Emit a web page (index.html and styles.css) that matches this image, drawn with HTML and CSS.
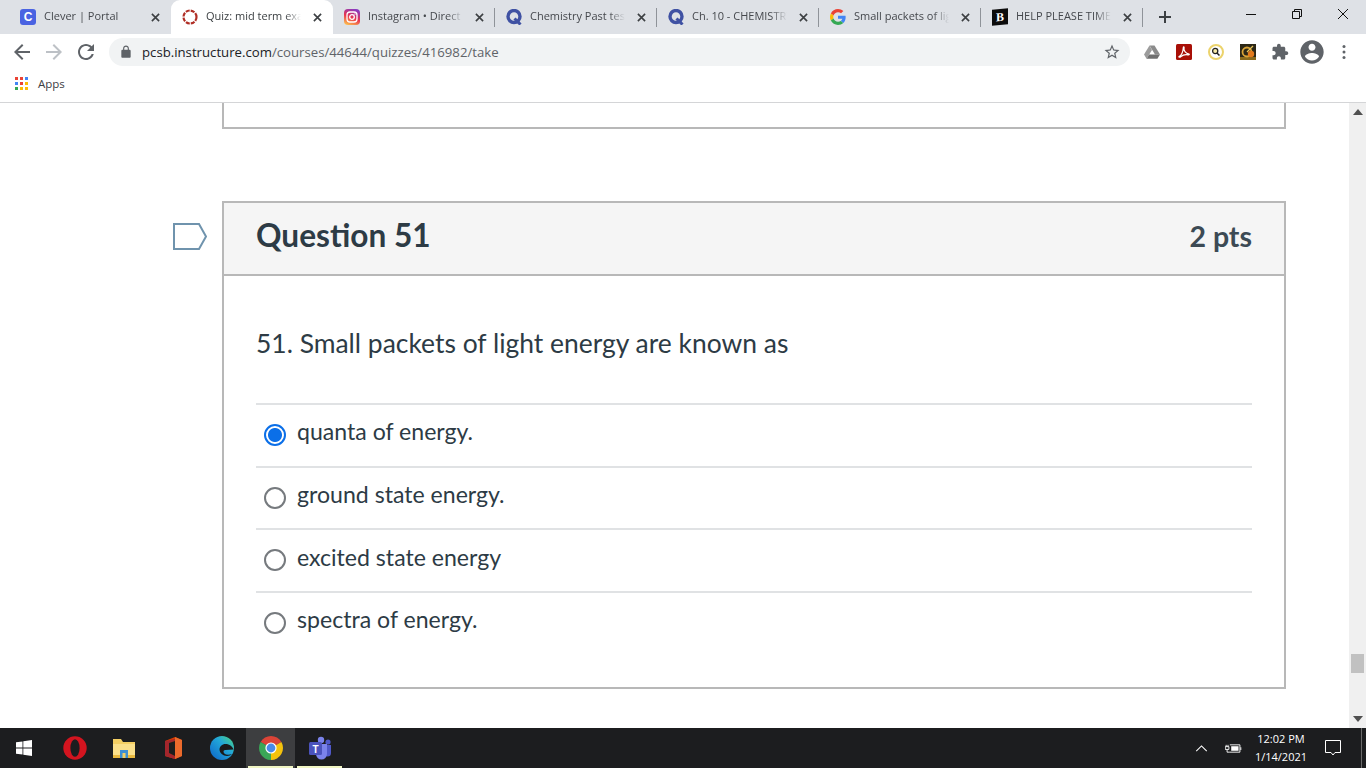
FILE: index.html
```html
<!DOCTYPE html>
<html lang="en">
<head>
<meta charset="utf-8">
<title>Quiz: mid term exam</title>
<link rel="stylesheet" href="styles.css">
</head>
<body>
<header class="browser">
  <div class="tabstrip">
    <div class="tab">
      <span class="favicon clever">C</span>
      <span class="tab-title">Clever | Portal</span>
      <svg class="tab-close" viewBox="0 0 10 10"><path d="M1 1l8 8M9 1l-8 8"/></svg>
    </div>
    <div class="tab active">
      <svg class="favicon" viewBox="0 0 16 16"><circle cx="8" cy="8" r="6.500" fill="none" stroke="#b02e25" stroke-width="2.200" stroke-dasharray="4 1.100"/></svg>
      <span class="tab-title">Quiz: mid term exam</span>
      <svg class="tab-close" viewBox="0 0 10 10"><path d="M1 1l8 8M9 1l-8 8"/></svg>
    </div>
    <div class="tab sep">
      <svg class="favicon" viewBox="0 0 16 16">
        <defs><linearGradient id="ig" x1="0.2" y1="1" x2="0.6" y2="0"><stop offset="0" stop-color="#fdc04e"/><stop offset=".5" stop-color="#e8344f"/><stop offset="1" stop-color="#8a3ac0"/></linearGradient></defs>
        <rect width="16" height="16" rx="4" fill="url(#ig)"/>
        <rect x="3" y="3" width="10" height="10" rx="3" fill="none" stroke="#fff" stroke-width="1.300"/>
        <circle cx="8" cy="8" r="2.300" fill="none" stroke="#fff" stroke-width="1.300"/>
        <circle cx="11" cy="5" r=".7" fill="#fff"/>
      </svg>
      <span class="tab-title">Instagram • Direct</span>
      <svg class="tab-close" viewBox="0 0 10 10"><path d="M1 1l8 8M9 1l-8 8"/></svg>
    </div>
    <div class="tab sep">
      <svg class="favicon" viewBox="0 0 16 16"><circle cx="8" cy="7.500" r="6" fill="none" stroke="#3f51a3" stroke-width="3.400"/><path d="M8.500 9.500l6 6" stroke="#3f51a3" stroke-width="3"/></svg>
      <span class="tab-title">Chemistry Past test</span>
      <svg class="tab-close" viewBox="0 0 10 10"><path d="M1 1l8 8M9 1l-8 8"/></svg>
    </div>
    <div class="tab sep">
      <svg class="favicon" viewBox="0 0 16 16"><circle cx="8" cy="7.500" r="6" fill="none" stroke="#3f51a3" stroke-width="3.400"/><path d="M8.500 9.500l6 6" stroke="#3f51a3" stroke-width="3"/></svg>
      <span class="tab-title">Ch. 10 - CHEMISTRY</span>
      <svg class="tab-close" viewBox="0 0 10 10"><path d="M1 1l8 8M9 1l-8 8"/></svg>
    </div>
    <div class="tab sep">
      <svg class="favicon" viewBox="0 0 48 48">
        <path fill="#EA4335" d="M24 9.500c3.540 0 6.710 1.220 9.210 3.600l6.850-6.850C35.900 2.380 30.470 0 24 0 14.620 0 6.510 5.380 2.560 13.220l7.980 6.190C12.430 13.720 17.740 9.500 24 9.500z"/>
        <path fill="#4285F4" d="M46.980 24.550c0-1.570-.15-3.090-.38-4.550H24v9.020h12.940c-.58 2.960-2.260 5.480-4.780 7.180l7.730 6c4.510-4.180 7.090-10.360 7.090-17.650z"/>
        <path fill="#FBBC05" d="M10.530 28.590c-.48-1.450-.76-2.990-.76-4.590s.27-3.140.76-4.590l-7.980-6.190C.92 16.460 0 20.120 0 24c0 3.880.92 7.540 2.560 10.780l7.970-6.190z"/>
        <path fill="#34A853" d="M24 48c6.480 0 11.930-2.130 15.890-5.810l-7.730-6c-2.150 1.450-4.920 2.300-8.160 2.300-6.260 0-11.570-4.220-13.470-9.910l-7.980 6.190C6.510 42.620 14.620 48 24 48z"/>
      </svg>
      <span class="tab-title">Small packets of light</span>
      <svg class="tab-close" viewBox="0 0 10 10"><path d="M1 1l8 8M9 1l-8 8"/></svg>
    </div>
    <div class="tab sep">
      <span class="favicon brainly">B</span>
      <span class="tab-title">HELP PLEASE TIMED</span>
      <svg class="tab-close" viewBox="0 0 10 10"><path d="M1 1l8 8M9 1l-8 8"/></svg>
    </div>
    <svg class="newtab" viewBox="0 0 12 12"><path d="M6 0v12M0 6h12"/></svg>
    <div class="window-controls">
      <svg class="wc" viewBox="0 0 46 28"><path d="M18 14.500h10"/></svg>
      <svg class="wc" viewBox="0 0 46 28"><path d="M18.500 11.500h7v7h-7zM20.500 11.500v-2h7v7h-2"/></svg>
      <svg class="wc" viewBox="0 0 46 28"><path d="M18 9l10 10M28 9l-10 10"/></svg>
    </div>
  </div>
  <div class="toolbar">
    <svg class="nav-icon" viewBox="0 0 24 24"><path d="M20 11H7.830l5.590-5.590L12 4l-8 8 8 8 1.410-1.410L7.830 13H20v-2z"/></svg>
    <svg class="nav-icon disabled flip" viewBox="0 0 24 24"><path d="M20 11H7.830l5.590-5.590L12 4l-8 8 8 8 1.410-1.410L7.830 13H20v-2z"/></svg>
    <svg class="nav-icon" viewBox="0 0 24 24"><path d="M17.650 6.350C16.200 4.900 14.210 4 12 4c-4.420 0-7.990 3.580-7.990 8s3.570 8 7.990 8c3.730 0 6.840-2.550 7.730-6h-2.080c-.82 2.330-3.040 4-5.650 4-3.310 0-6-2.690-6-6s2.690-6 6-6c1.660 0 3.140.69 4.220 1.780L13 11h7V4l-2.350 2.350z"/></svg>
    <div class="omnibox">
      <svg class="lock" viewBox="0 0 24 24"><path d="M18 8h-1V6c0-2.760-2.240-5-5-5S7 3.240 7 6v2H6c-1.100 0-2 .9-2 2v10c0 1.100.9 2 2 2h12c1.100 0 2-.9 2-2V10c0-1.100-.9-2-2-2zM9 6c0-1.660 1.340-3 3-3s3 1.340 3 3v2H9V6z"/></svg>
      <span class="url"><span class="host">pcsb.instructure.com</span>/courses/44644/quizzes/416982/take</span>
      <svg class="star" viewBox="0 0 24 24"><path d="M22 9.240l-7.190-.62L12 2 9.190 8.630 2 9.240l5.460 4.730L5.820 21 12 17.270 18.180 21l-1.630-7.030L22 9.240zM12 15.400l-3.760 2.270 1-4.280-3.320-2.880 4.380-.38L12 6.100l1.710 4.040 4.380.38-3.320 2.880 1 4.280L12 15.400z"/></svg>
    </div>
    <div class="extensions">
      <span class="ext"><svg class="ext-16" viewBox="0 0 16 16"><path d="M5.500 1.500h5L16 10.500h-5z" fill="#8b8b8b"/><path d="M5.500 1.500L0 10.500l2.600 4.200L8 6z" fill="#9c9c9c"/><path d="M2.600 14.700h10.800l2.600-4.200H5.200z" fill="#707070"/></svg></span>
      <span class="ext"><svg class="ext-16" viewBox="0 0 16 16"><rect width="16" height="16" rx="1.500" fill="#a80f07"/><path d="M3 12.500c2-1 4-5 4.300-8.800C7.400 2 8.500 3 8 5c-.3 1.500 2 4.500 4.500 4.800 1.500.2.800 1.200-.5 1-2-.3-5.500.3-7 1.700-1 1-2.800 1-2 0z" fill="none" stroke="#fff" stroke-width="1.200"/></svg></span>
      <span class="ext"><svg class="ext-16" viewBox="0 0 16 16"><circle cx="8" cy="8" r="7" fill="#fff" stroke="#ecd36c" stroke-width="2"/><circle cx="7.200" cy="7" r="2.600" fill="#f7e9a8" stroke="#222" stroke-width="1.300"/><path d="M9 9l2.500 2.500" stroke="#222" stroke-width="1.500"/></svg></span>
      <span class="ext"><svg class="ext-16" viewBox="0 0 16 16"><rect width="16" height="16" fill="#2c2716"/><rect y="13" width="16" height="3" fill="#8a6a1c"/><circle cx="7" cy="8" r="4.500" fill="none" stroke="#d9a437" stroke-width="1.800"/><circle cx="11" cy="10" r="3.200" fill="#e2791c"/><path d="M7 8l6-6" stroke="#e8c35a" stroke-width="1.200"/></svg></span>
      <span class="ext"><svg class="ext-18" viewBox="0 0 24 24"><path d="M20.500 11H19V7c0-1.100-.9-2-2-2h-4V3.500C13 2.120 11.880 1 10.500 1S8 2.120 8 3.500V5H4c-1.100 0-1.990.9-1.990 2v3.800H3.500c1.490 0 2.700 1.210 2.700 2.700s-1.210 2.700-2.700 2.700H2V20c0 1.100.9 2 2 2h3.800v-1.500c0-1.490 1.210-2.700 2.700-2.700 1.490 0 2.700 1.210 2.700 2.700V22H17c1.100 0 2-.9 2-2v-4h1.500c1.380 0 2.500-1.120 2.500-2.500S21.880 11 20.500 11z"/></svg></span>
      <span class="ext"><svg class="ext-26" viewBox="0 0 24 24"><path d="M12 2C6.480 2 2 6.480 2 12s4.480 10 10 10 10-4.480 10-10S17.520 2 12 2zm0 3c1.660 0 3 1.340 3 3s-1.340 3-3 3-3-1.340-3-3 1.340-3 3-3zm0 14.200c-2.500 0-4.710-1.280-6-3.220.03-1.990 4-3.080 6-3.080 1.990 0 5.970 1.090 6 3.080-1.290 1.940-3.500 3.220-6 3.220z"/></svg></span>
      <span class="ext"><svg class="ext-16" viewBox="0 0 16 16"><circle cx="8" cy="2.500" r="1.500"/><circle cx="8" cy="8" r="1.500"/><circle cx="8" cy="13.500" r="1.500"/></svg></span>
    </div>
  </div>
  <div class="bookmarks">
    <span class="apps-grid">
      <i class="d1"></i><i class="d2"></i><i class="d3"></i>
      <i class="d4"></i><i class="d5"></i><i class="d6"></i>
      <i class="d7"></i><i class="d8"></i><i class="d9"></i>
    </span>
    <span class="apps-label">Apps</span>
  </div>
</header>

<div class="viewport">
  <main class="page">
    <div class="prev-box"></div>
    <section class="question">
      <svg class="flag" viewBox="0 0 34 30"><path d="M1 3h25l7 12.500L26 28H1z"/></svg>
      <div class="q-head">
        <h2 class="q-name">Question 51</h2>
        <span class="q-pts">2 pts</span>
      </div>
      <div class="q-body">
        <p class="q-text">51. Small packets of light energy are known as</p>
        <div class="answers">
          <label class="answer"><input type="radio" name="q51" checked><span>quanta of energy.</span></label>
          <label class="answer"><input type="radio" name="q51"><span>ground state energy.</span></label>
          <label class="answer"><input type="radio" name="q51"><span>excited state energy</span></label>
          <label class="answer"><input type="radio" name="q51"><span>spectra of energy.</span></label>
        </div>
      </div>
    </section>
  </main>
  <div class="scrollbar">
    <svg class="sb-arrow up" viewBox="0 0 10 6"><path d="M5 0l5 6H0z"/></svg>
    <div class="sb-track"><div class="sb-thumb"></div></div>
    <svg class="sb-arrow" viewBox="0 0 10 6"><path d="M0 0h10L5 6z"/></svg>
  </div>
</div>

<footer class="taskbar">
  <div class="start">
    <svg class="start-logo" viewBox="0 0 16 16"><path d="M0 2.300l6.500-.9v6.200H0zM7.300 1.300L16 0v7.600H7.300zM0 8.400h6.500v6.200L0 13.700zM7.300 8.400H16V16l-8.700-1.200z"/></svg>
  </div>
  <div class="task">
    <svg class="task-icon" viewBox="0 0 24 24"><circle cx="12" cy="12" r="11.700" fill="#d3141f"/><ellipse cx="12" cy="12" rx="4.600" ry="8.800" fill="#1c1d1f"/></svg>
  </div>
  <div class="task">
    <svg class="task-icon" viewBox="0 0 24 24"><path d="M1 3h8l2 3h12v16H1z" fill="#f4cf63"/><path d="M1 8h22v14H1z" fill="#fbe08a"/><path d="M1 19h22v3H1z" fill="#e9b93f"/><path d="M8 14h8v8H8z" fill="#3f8fd2"/><path d="M10.500 17h3v5h-3z" fill="#f4cf63"/></svg>
  </div>
  <div class="task">
    <svg class="task-icon" viewBox="0 0 24 24"><path d="M14 1l7 3v16l-7 3-10-3V5z" fill="#d83b01"/><path d="M14 1l7 3v16l-7 3z" fill="#eb6a2c"/><path d="M4 5l10-2v2L8 7v10l6 3v3L4 20z" fill="#a4262c"/><path d="M8 7l6-2v15l-6-3z" fill="#1d1d1d"/></svg>
  </div>
  <div class="task">
    <svg class="task-icon" viewBox="0 0 24 24">
      <defs><linearGradient id="ed" x1="0" y1="1" x2="1" y2="0"><stop offset="0" stop-color="#0c63c9"/><stop offset=".6" stop-color="#22a7d8"/><stop offset="1" stop-color="#4fd67c"/></linearGradient></defs>
      <circle cx="12" cy="12" r="12" fill="url(#ed)"/>
      <path d="M23.500 13.500C22 9.500 18.500 8 15.500 8 12 8 9.500 10.500 9.500 13.500 9.500 17 13 20 17 20c2 0 4-.7 5-2-1.200.5-2.500.8-4 .8-3 0-4.500-1.500-4.500-3.300 0-1 1-1.500 2-1.500z" fill="#1b1b1b"/>
    </svg>
  </div>
  <div class="task current">
    <svg class="task-icon" viewBox="0 0 24 24">
      <path d="M12 12L1.610 6A12 12 0 0 1 22.390 6Z" fill="#db4437"/>
      <path d="M12 12L22.390 6A12 12 0 0 1 12 24Z" fill="#f4c20d"/>
      <path d="M12 12L12 24A12 12 0 0 1 1.610 6Z" fill="#3aa757"/>
      <circle cx="12" cy="12" r="5.600" fill="#fff"/>
      <circle cx="12" cy="12" r="4.400" fill="#4a8ae8"/>
    </svg>
  </div>
  <div class="task running">
    <svg class="task-icon" viewBox="0 0 24 24">
      <circle cx="13" cy="4" r="3.200" fill="#7b83eb"/>
      <circle cx="20" cy="6" r="2.600" fill="#5059c9"/>
      <path d="M16 9h7v8a3.500 3.500 0 0 1-7 0z" fill="#5059c9"/>
      <path d="M8 8h11v10a5.500 5.500 0 0 1-11 0z" fill="#7b83eb"/>
      <rect x="1" y="6" width="13" height="13" rx="1.500" fill="#4b53bc"/>
      <text class="teams-t" x="7.500" y="16.500">T</text>
    </svg>
  </div>
  <div class="tray">
    <span class="tray-item"><svg class="tray-chev" viewBox="0 0 14 8"><path d="M1 7l6-6 6 6"/></svg></span>
    <span class="tray-item"><svg class="tray-batt" viewBox="0 0 18 12"><path d="M5 2h11v8H5" fill="none" stroke="#fff" stroke-width="1"/><path d="M6.500 3.500h8v5h-8z" fill="#fff"/><path d="M16.500 4.500h1v3h-1z" fill="#fff"/><path d="M0 4h4v3H0zM1 2v2M3 2v2M2 7v3h3" fill="none" stroke="#fff"/></svg></span>
    <div class="clock"><span>12:02 PM</span><span>1/14/2021</span></div>
    <span class="tray-item notif"><svg class="notif-icon" viewBox="0 0 16 16"><path d="M.5.500h15v12h-5.500l-2 2.500-2-2.500H.5z"/></svg></span>
    <span class="peek"></span>
  </div>
</footer>
</body>
</html>
```

FILE: styles.css
```css
* { box-sizing: border-box; }
html, body { margin: 0; height: 100%; }
body {
  display: flex;
  flex-direction: column;
  height: 768px;
  overflow: hidden;
  background: #fff;
  font-family: "Lato", "Open Sans", sans-serif;
}

/* browser chrome */
.browser { flex: none; font-family: "Open Sans", "Noto Sans", sans-serif; }
.tabstrip {
  display: flex;
  align-items: stretch;
  height: 34px;
  padding-left: 9px;
  background: #dee1e6;
}
.tab {
  position: relative;
  flex: none;
  display: flex;
  align-items: center;
  width: 162px;
  padding: 0 5px 0 11px;
  color: #45484d;
  font-size: 11px;
}
.tab.active {
  background: #fff;
  border-radius: 9px 9px 0 0;
  color: #3c4043;
}
.tab.sep::after {
  content: "";
  position: absolute;
  right: 0;
  top: 8px;
  width: 1px;
  height: 19px;
  background: #8f9399;
}
.favicon {
  flex: none;
  display: block;
  width: 16px;
  height: 16px;
  margin-right: 8px;
}
.clever {
  background: #4a63e2;
  border-radius: 3px;
  color: #fff;
  font: bold 12px/16px "Liberation Sans", sans-serif;
  text-align: center;
}
.brainly {
  background: #0c0c0c;
  color: #fff;
  font: bold 12px/16px "Liberation Serif", serif;
  text-align: center;
  transform: skewY(-6deg);
}
.tab-title {
  flex: 1;
  min-width: 0;
  margin-bottom: 2px;
  overflow: hidden;
  white-space: nowrap;
  line-height: 16px;
  -webkit-mask-image: linear-gradient(to right, #000 80%, transparent 96%);
  mask-image: linear-gradient(to right, #000 80%, transparent 96%);
}
.tab-close {
  flex: none;
  width: 9px;
  height: 9px;
  margin: 0 6px 0 8px;
  fill: none;
  stroke: #3d4043;
  stroke-width: 1.800;
}
.newtab {
  flex: none;
  align-self: center;
  width: 12px;
  height: 12px;
  margin-left: 16px;
  fill: none;
  stroke: #3c4043;
  stroke-width: 2;
}
.window-controls {
  display: flex;
  align-items: flex-start;
  margin-left: auto;
}
.wc {
  display: block;
  width: 46px;
  height: 28px;
  fill: none;
  stroke: #111;
  stroke-width: 1;
}

.toolbar {
  display: flex;
  align-items: center;
  height: 34px;
  padding: 2px 0 0 6px;
  background: #fff;
}
.nav-icon {
  flex: none;
  width: 24px;
  height: 24px;
  margin: 0 4px;
  fill: #5f6368;
}
.nav-icon.disabled { fill: #bdc1c6; }
.nav-icon.flip { transform: scaleX(-1); }
.omnibox {
  flex: none;
  display: flex;
  align-items: center;
  width: 1021px;
  height: 28px;
  margin-left: 7px;
  padding: 0 9px 0 10px;
  border-radius: 14px;
  background: #f1f3f4;
  color: #5f6368;
  font-size: 13.200px;
}
.lock { flex: none; width: 14px; height: 14px; fill: #5f6368; }
.url { margin-left: 9px; white-space: nowrap; }
.host { color: #202124; }
.star { flex: none; width: 18px; height: 18px; margin-left: auto; fill: #5f6368; }
.extensions { flex: none; display: flex; margin-left: 6px; }
.ext {
  display: flex;
  align-items: center;
  justify-content: center;
  width: 32px;
  height: 28px;
}
.ext svg { display: block; fill: #5f6368; }
.ext-16 { width: 16px; height: 16px; }
.ext-18 { width: 18px; height: 18px; }
.ext-26 { width: 28px; height: 28px; }

.bookmarks {
  display: flex;
  align-items: center;
  height: 35px;
  padding: 0 0 3px 15px;
  border-bottom: 1px solid #d4d5d7;
  background: #fff;
}
.apps-grid {
  display: grid;
  grid-template-columns: repeat(3, 3px);
  gap: 2px;
}
.apps-grid i { display: block; width: 3px; height: 3px; }
.d1 { background: #ea4335; }
.d2 { background: #ea4335; }
.d3 { background: #4285f4; }
.d4 { background: #4285f4; }
.d5 { background: #ea4335; }
.d6 { background: #fbbc05; }
.d7 { background: #34a853; }
.d8 { background: #fbbc05; }
.d9 { background: #fbbc05; }
.apps-label { margin-left: 10px; color: #3c4043; font-size: 11.500px; }

/* page */
.viewport { flex: 1; min-height: 0; display: flex; }
.page { flex: 1; min-width: 0; padding: 0 63px 0 222px; overflow: hidden; }
.prev-box {
  height: 26px;
  border: 2px solid #b8b8b8;
  border-top: 0;
  margin-bottom: 72px;
}
.question {
  position: relative;
  height: 488px;
  border: 2px solid #b8b8b8;
  color: #2d3b45;
}
.flag {
  position: absolute;
  left: -51px;
  top: 18px;
  width: 34px;
  height: 30px;
  fill: #fff;
  stroke: #6f93ad;
  stroke-width: 2;
}
.q-head {
  display: flex;
  align-items: center;
  justify-content: space-between;
  height: 73px;
  padding: 0 32px 6px;
  background: #f5f5f5;
  border-bottom: 2px solid #b8b8b8;
}
.q-name { margin: 0; font-size: 31.600px; line-height: 1; font-weight: 700; }
.q-pts { font-size: 28.500px; font-weight: 700; color: #3c4a54; }
.q-body { padding: 0 32px; }
.q-text { margin: 0; padding-top: 50px; font-size: 26.450px; line-height: 34px; }
.answers { margin-top: 43px; }
.answer {
  display: flex;
  align-items: center;
  height: 62.700px;
  border-top: 2px solid #e0e2e4;
  padding: 0 0 6px 8px;
  font-size: 23.100px;
}
.answer span { margin-bottom: 2px; }
.answer input {
  appearance: none;
  flex: none;
  width: 22px;
  height: 22px;
  margin: 5px 11px 0 0;
  border: 2px solid #767a7e;
  border-radius: 50%;
  background: #fff;
}
.answer input:checked {
  border-color: #0b6fe8;
  background: radial-gradient(circle, #0b6fe8 0 6.500px, #fff 7.500px);
}

/* scrollbar */
.scrollbar {
  flex: none;
  width: 17px;
  display: flex;
  flex-direction: column;
  align-items: center;
  background: #f0f0f0;
}
.sb-arrow { flex: none; width: 10px; height: 6px; margin: 6px 0; fill: #505050; }
.sb-arrow.up { margin-top: 6px; }
.sb-track { flex: 1; width: 100%; padding: 533px 2px 0 2px; }
.sb-thumb { height: 19px; background: #c1c1c1; }

/* taskbar */
.taskbar {
  flex: none;
  display: flex;
  align-items: center;
  height: 40px;
  background: #1c1d1f;
  color: #fff;
  font-family: "Open Sans", "Noto Sans", sans-serif;
}
.start { flex: none; display: flex; align-items: center; justify-content: center; width: 50px; height: 40px; padding-right: 2px; }
.start-logo { width: 16px; height: 16px; fill: #fff; }
.task {
  flex: none;
  position: relative;
  display: flex;
  align-items: center;
  justify-content: center;
  width: 49px;
  height: 40px;
}
.task-icon { width: 24px; height: 24px; display: block; }
.task.current { background: #3d3e40; }
.task.current::after, .task.running::after {
  content: "";
  position: absolute;
  left: 2px;
  right: 2px;
  bottom: 0;
  height: 2px;
  background: #f1f6c4;
}
.teams-t { fill: #fff; font: bold 10px "Liberation Sans", sans-serif; text-anchor: middle; }
.tray { display: flex; align-items: center; margin-left: auto; height: 40px; }
.tray-item { display: flex; align-items: center; justify-content: center; width: 32px; height: 40px; }
.tray-chev { width: 13px; height: 7px; fill: none; stroke: #fff; stroke-width: 1.200; }
.tray-batt { width: 17px; height: 11px; }
.clock {
  display: flex;
  flex-direction: column;
  align-items: center;
  width: 64px;
  font-size: 11px;
  line-height: 18px;
}
.tray-item.notif { width: 40px; }
.notif-icon { width: 16px; height: 16px; fill: none; stroke: #fff; stroke-width: 1; }
.peek { width: 5px; height: 40px; margin-left: 8px; border-left: 1px solid #6a6a6a; }
```
